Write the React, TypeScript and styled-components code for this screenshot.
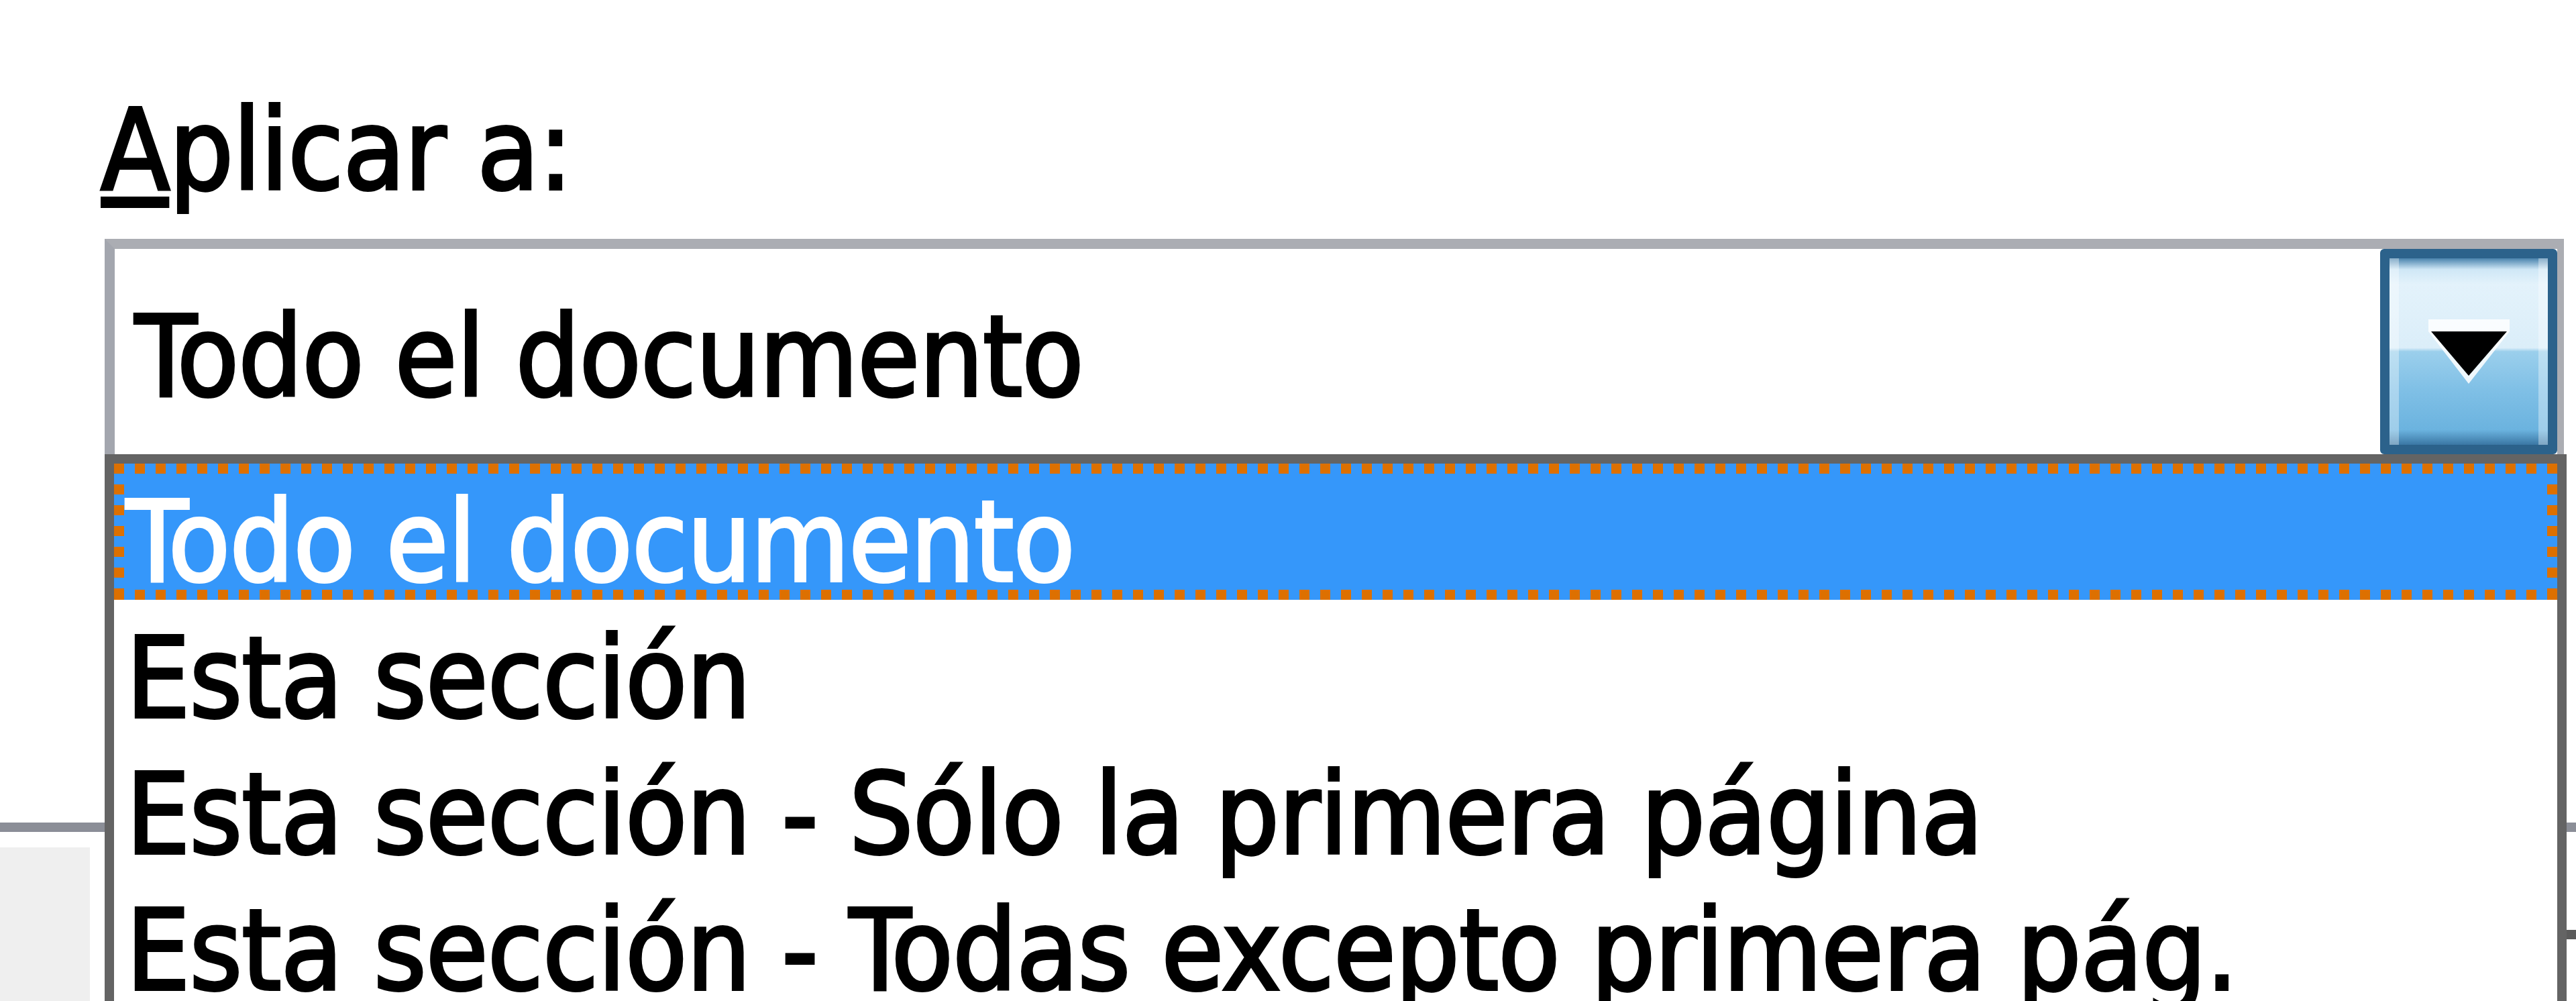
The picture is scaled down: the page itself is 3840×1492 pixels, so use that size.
import React from "react";
import styled, { createGlobalStyle } from "styled-components";

const GlobalStyle = createGlobalStyle`
  html, body {
    margin: 0;
    padding: 0;
    background: #ffffff;
    overflow: hidden;
  }
  body {
    font-family: "DejaVu Sans", "Liberation Sans", sans-serif;
  }
`;

const Page = styled.div`
  width: 3840px;
  height: 1492px;
  overflow: hidden;
  background: #ffffff;
  display: flex;
  flex-direction: column;
  font-family: "DejaVu Sans", "Liberation Sans", sans-serif;
  font-stretch: condensed;
  font-size: 168px;
  color: #000;
  -webkit-text-stroke-width: 4px;
`;

const Form = styled.div`
  position: relative;
  z-index: 1;
  display: flex;
  flex-direction: column;
  padding: 126px 18px 0 156px;
`;

const Label = styled.label`
  display: block;
  height: 196px;
  margin-left: -6px;
  line-height: 196px;
  letter-spacing: -1px;
  white-space: nowrap;
`;

const AccessKey = styled.span`
  text-decoration: underline;
  text-decoration-thickness: 17px;
  text-underline-offset: 11px;
`;

const ComboWrap = styled.div`
  position: relative;
  margin-top: 34px;
`;

const Combo = styled.div`
  display: flex;
  height: 306px;
  border: 15px solid #abadb3;
  border-left-color: #a3a6ae;
  border-right-width: 10px;
  border-bottom: none;
  background: #ffffff;
`;

const ComboText = styled.div`
  flex: 1;
  padding: 63px 0 0 30px;
  line-height: 196px;
  letter-spacing: -1px;
  white-space: nowrap;
`;

const DropButton = styled.div`
  box-sizing: border-box;
  width: 264px;
  height: 306px;
  display: flex;
  align-items: center;
  justify-content: center;
  border: 14px solid #2c628b;
  border-radius: 6px;
  background: linear-gradient(
    180deg,
    #4a83ad 0%,
    #cfe7f6 6%,
    #e3f2fb 14%,
    #dbeef9 48%,
    #9bcfec 50%,
    #80c0e6 70%,
    #6bb3df 92%,
    #3b77a4 100%
  );
  box-shadow: inset 14px 0 0 rgba(255, 255, 255, 0.35),
    inset -14px 0 0 rgba(255, 255, 255, 0.35);
`;

const DropList = styled.div`
  position: absolute;
  top: 100%;
  left: 0;
  right: -4px;
  border: 14px solid #646464;
  background: #ffffff;
`;

const Item = styled.div<{ $selected?: boolean }>`
  position: relative;
  box-sizing: border-box;
  height: 203px;
  padding: 32px 0 0 18px;
  line-height: 171px;
  letter-spacing: -1px;
  white-space: nowrap;
  background: ${(p) => (p.$selected ? "#3597fa" : "transparent")};
  color: ${(p) => (p.$selected ? "#ffffff" : "#000000")};

  ${(p) =>
    p.$selected &&
    `
    &::after {
      content: "";
      position: absolute;
      inset: 0;
      background:
        repeating-linear-gradient(90deg, #dd7000 0 15px, transparent 15px 31px) top left / 100% 15px no-repeat,
        repeating-linear-gradient(90deg, #dd7000 0 15px, transparent 15px 31px) bottom left / 100% 15px no-repeat,
        repeating-linear-gradient(180deg, #dd7000 0 15px, transparent 15px 31px) top left / 15px 100% no-repeat,
        repeating-linear-gradient(180deg, #dd7000 0 15px, transparent 15px 31px) top right / 15px 100% no-repeat;
    }
  `}
`;

const Footer = styled.div`
  flex: 1;
  display: flex;
  flex-direction: column;
  margin-top: 549px;
`;

const Separator = styled.div`
  height: 14px;
  background: #8b8e97;
`;

const FooterBody = styled.div`
  flex: 1;
  display: flex;
  justify-content: space-between;
  padding-top: 23px;
`;

const SidePanel = styled.div`
  width: 134px;
  background: #efefef;
`;

const CornerButton = styled.div`
  width: 300px;
  margin-top: 123px;
  border-top: 14px solid #5b5b5b;
  background: #ffffff;
`;

const Arrow = () => (
  <svg width="133" height="100" viewBox="0 0 133 100">
    <polygon points="6,2 127,2 127,20 66,98 6,20" fill="#ffffff" opacity="0.85" />
    <polygon points="10,20 123,20 66,86" fill="#000000" />
  </svg>
);

const options = [
  "Todo el documento",
  "Esta sección",
  "Esta sección - Sólo la primera página",
  "Esta sección - Todas excepto primera pág.",
];

export default function App() {
  return (
    <Page>
      <GlobalStyle />
      <Form>
        <Label>
          <AccessKey>A</AccessKey>plicar a:
        </Label>
        <ComboWrap>
          <Combo>
            <ComboText>Todo el documento</ComboText>
            <DropButton>
              <Arrow />
            </DropButton>
          </Combo>
          <DropList>
            {options.map((o, i) => (
              <Item key={o} $selected={i === 0}>
                {o}
              </Item>
            ))}
          </DropList>
        </ComboWrap>
      </Form>
      <Footer>
        <Separator />
        <FooterBody>
          <SidePanel />
          <CornerButton />
        </FooterBody>
      </Footer>
    </Page>
  );
}
